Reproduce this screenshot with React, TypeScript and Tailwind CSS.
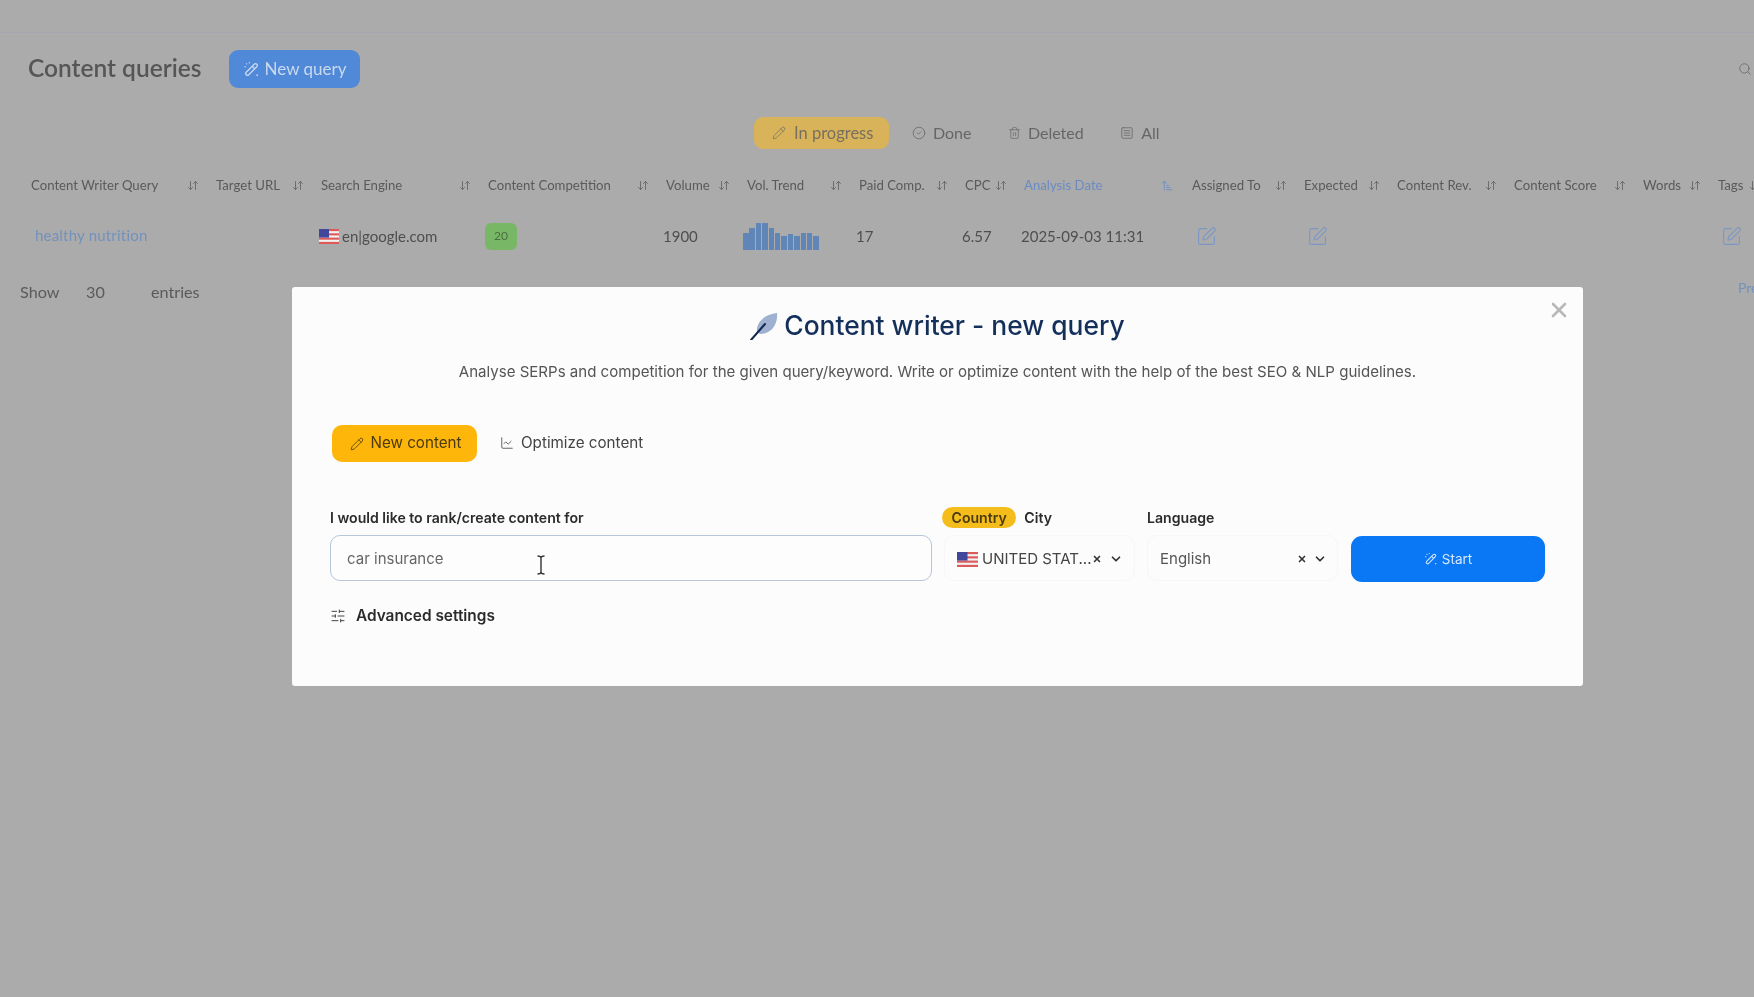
import {
  ArrowDownUp,
  ArrowUpNarrowWide,
  ChartLine,
  ChevronDown,
  CircleCheck,
  Pencil,
  Search,
  SlidersHorizontal,
  SquareMenu,
  SquarePen,
  Trash2,
  X,
} from 'lucide-react';

const columns = [
  'Content Writer Query',
  'Target URL',
  'Search Engine',
  'Content Competition',
  'Volume',
  'Vol. Trend',
  'Paid Comp.',
  'CPC',
  'Analysis Date',
  'Assigned To',
  'Expected',
  'Content Rev.',
  'Content Score',
  'Words',
  'Tags',
];

const trend = [17, 22, 27, 27, 22, 17, 14, 16, 14, 17, 17, 14];

const gridCols =
  'grid-cols-[185px_105px_167px_178px_81px_112px_106px_59px_168px_112px_93px_117px_129px_75px_60px]';

function WandIcon({ className }: { className?: string }) {
  return (
    <svg viewBox="0 0 24 24" fill="none" stroke="currentColor" strokeWidth="1.8" className={className}>
      <rect x="9.5" y="1.5" width="5" height="21" rx="2.5" transform="rotate(45 12 12)" />
      <path d="M13 7.5 16.5 11" />
      <circle cx="5" cy="4" r="1" fill="currentColor" stroke="none" />
      <circle cx="9" cy="2.5" r="1" fill="currentColor" stroke="none" />
      <circle cx="3" cy="8" r="1" fill="currentColor" stroke="none" />
      <circle cx="20" cy="20" r="1.2" fill="currentColor" stroke="none" />
    </svg>
  );
}

function UsFlag({ className }: { className?: string }) {
  return (
    <svg viewBox="0 0 20 14" preserveAspectRatio="none" className={className}>
      <rect width="20" height="14" fill="#f2f2f2" />
      <rect y="0" width="20" height="2" fill="#dd5a5a" />
      <rect y="4" width="20" height="2" fill="#dd5a5a" />
      <rect y="8" width="20" height="2" fill="#dd5a5a" />
      <rect y="12" width="20" height="2" fill="#dd5a5a" />
      <rect width="10" height="8" fill="#41479b" />
    </svg>
  );
}

function FeatherIcon() {
  return (
    <svg viewBox="0 0 28 28" className="w-[28px] h-[28px]">
      <path d="M7 20C6 12 12 3 27 1c1 9-4 21-17 21z" fill="#9fb0d0" />
      <path d="M1 28 15 12" stroke="#12284c" strokeWidth="2" strokeLinecap="round" />
    </svg>
  );
}

function IBeam() {
  return (
    <svg viewBox="0 0 10 20" className="w-[10px] h-[20px]" fill="none" stroke="#333" strokeWidth="1.4">
      <path d="M1.5 1C3.5 1 5 2 5 3v14c0 1-1.5 2-3.5 2M8.5 1C6.5 1 5 2 5 3M5 17c0 1 1.5 2 3.5 2" />
    </svg>
  );
}

function Background() {
  return (
    <div className="font-['Lato','Liberation_Sans',sans-serif] text-[#5a5a5a]">
      <div className="h-[33px] border-b border-[#a5a7ae]" />
      <div className="flex items-center h-[70px] mt-[1px] pl-[28px] pr-0">
        <h1 className="text-[24.5px] font-semibold text-[#565656] w-[201px] pb-[2px]">Content queries</h1>
        <button className="flex items-center justify-center gap-[5px] w-[131px] h-[38px] rounded-[9px] bg-[#5089d8] text-[#c9d9ee] text-[17px]">
          <WandIcon className="w-[17px] h-[17px]" />
          New query
        </button>
        <Search className="ml-auto mr-[2px] w-[14px] h-[14px] text-[#6b6b6b]" strokeWidth={1.5} />
      </div>

      <div className="flex items-center gap-[4.5px] h-[32px] mt-[13px] ml-[754px] text-[16px] text-[#666]">
        <div className="flex items-center gap-[8px] h-[32px] pl-[18px] pr-[16px] mr-[2px] rounded-[9px] bg-[#d8b35a] text-[16.5px] text-[#77705f]">
          <Pencil className="w-[14px] h-[14px]" strokeWidth={1.3} />
          In progress
        </div>
        <div className="flex items-center gap-[7px] px-[16px]">
          <CircleCheck className="w-[14px] h-[14px]" strokeWidth={1.3} />
          Done
        </div>
        <div className="flex items-center gap-[7px] px-[16px]">
          <Trash2 className="w-[13px] h-[14px]" strokeWidth={1.3} />
          Deleted
        </div>
        <div className="flex items-center gap-[7px] px-[16px]">
          <SquareMenu className="w-[14px] h-[14px]" strokeWidth={1.3} />
          All
        </div>
      </div>

      <div className={`grid ${gridCols} pl-[31px] mt-[26px] h-[22px] items-center text-[13.2px] whitespace-nowrap`}>
        {columns.map((col) => {
          const active = col === 'Analysis Date';
          return (
            <div key={col} className={`flex items-center justify-between pr-[17px] ${active ? 'text-[#6a8cc4]' : ''}`}>
              {col}
              {active ? (
                <ArrowUpNarrowWide className="w-[14px] h-[13px] shrink-0 mr-[1px]" strokeWidth={1.5} />
              ) : (
                <ArrowDownUp className="w-[12px] h-[13px] shrink-0" strokeWidth={1.5} />
              )}
            </div>
          );
        })}
      </div>

      <div className={`grid ${gridCols} pl-[28px] mt-[24px] h-[30px] items-center text-[15px] text-[#4f4f4f] whitespace-nowrap`}>
        <div className="pl-[7px] pb-[2px] text-[#7391bd] tracking-[0.2px]">healthy nutrition</div>
        <div />
        <div className="flex items-center gap-[3px]">
          <UsFlag className="w-[20px] h-[15px] ml-[1px]" />
          en|google.com
        </div>
        <div>
          <div className="flex items-center justify-center w-[32px] h-[27px] rounded-[6px] bg-[#78b765] text-[12px] text-[#4b6f42]">
            20
          </div>
        </div>
        <div>1900</div>
        <div className="flex items-end gap-[0.9px] h-[28px] ml-[-1px]">
          {trend.map((h, i) => (
            <div key={i} className="w-[5.5px] bg-[#5f86b6]" style={{ height: h }} />
          ))}
        </div>
        <div>17</div>
        <div>6.57</div>
        <div>2025-09-03 11:31</div>
        <div className="pl-[7px]">
          <SquarePen className="w-[21px] h-[21px] text-[#7b97c4]" strokeWidth={1.3} />
        </div>
        <div className="pl-[6px]">
          <SquarePen className="w-[21px] h-[21px] text-[#7b97c4]" strokeWidth={1.3} />
        </div>
        <div />
        <div />
        <div />
        <div className="pl-[6px]">
          <SquarePen className="w-[21px] h-[21px] text-[#7b97c4]" strokeWidth={1.3} />
        </div>
      </div>

      <div className="flex items-center justify-between mt-[30px] h-[22px] pl-[20px] text-[16.2px] text-[#5a5a5a]">
        <div className="flex items-center">
          <span className="w-[66px]">Show</span>
          <span className="w-[65px]">30</span>
          <span>entries</span>
        </div>
        <span className="text-[#7391bd] text-[14px] w-[16px] mb-[9px] overflow-hidden">Previous</span>
      </div>
    </div>
  );
}

function Modal() {
  return (
    <div className="absolute left-[292px] top-[287px] w-[1291px] h-[399px] rounded-[3px] bg-[#fcfcfd] px-[38px] font-['Inter','Liberation_Sans',sans-serif]">
      <X className="absolute right-[12px] top-[11px] w-[24px] h-[24px] text-[#b8b8b8]" strokeWidth={2.6} />

      <div className="flex items-center justify-center gap-[6px] pt-[15px] h-[62px] text-[26.4px] font-medium text-[#14305a]">
        <FeatherIcon />
        <h2>Content writer - new query</h2>
      </div>
      <p className="text-center text-[15.05px] text-[#555] mt-[12px] leading-[22px]">
        Analyse SERPs and competition for the given query/keyword. Write or optimize content with the help of the best SEO &amp; NLP guidelines.
      </p>

      <div className="flex items-center gap-[23px] mt-[42px] pl-[2px] text-[15.2px]">
        <button className="flex items-center gap-[6px] h-[37px] w-[145px] pl-[3px] justify-center rounded-[10px] bg-[#ffb60a] text-[#4a3a10]">
          <Pencil className="w-[14px] h-[14px]" strokeWidth={1.4} />
          New content
        </button>
        <button className="flex items-center gap-[7px] text-[#444]">
          <ChartLine className="w-[14px] h-[14px]" strokeWidth={1.4} />
          Optimize content
        </button>
      </div>

      <div className="flex gap-[10px] mt-[45px]">
        <div className="w-[602px]">
          <div className="flex items-center h-[21px] mb-[7px] pt-[1px] text-[14.1px] font-semibold text-[#2b2b2b]">
            I would like to rank/create content for
          </div>
          <div className="relative flex items-center h-[46px] px-[16px] pt-[2px] rounded-[10px] border border-[#b5c6d8] bg-[#fdfdfe] text-[15px] text-[#666]">
            car insurance
            <span className="absolute left-[205px] top-[19px]">
              <IBeam />
            </span>
          </div>
        </div>

        <div className="w-[193px]">
          <div className="flex items-center gap-[8px] h-[21px] mb-[7px] text-[14.1px] font-semibold text-[#2b2b2b]">
            <span className="flex items-center h-[21px] px-[9.5px] rounded-full bg-[#f5bd1c] text-[#4a3a10]">Country</span>
            City
          </div>
          <div className="flex items-center h-[46px] pl-[12px] pr-[11px] ml-[2px] pt-[2px] rounded-[10px] border border-[#f7f7f9] text-[15px] text-[#444]">
            <UsFlag className="w-[21px] h-[15px] mr-[4px]" />
            <span className="whitespace-nowrap">UNITED STAT...</span>
            <X className="w-[10px] h-[10px] ml-auto text-[#333]" strokeWidth={4} />
            <ChevronDown className="w-[14px] h-[14px] ml-[7px] text-[#333]" strokeWidth={3} />
          </div>
        </div>

        <div className="w-[191px] ml-[2px]">
          <div className="flex items-center h-[21px] mb-[7px] pt-[1px] text-[14.1px] font-semibold text-[#2b2b2b]">Language</div>
          <div className="flex items-center h-[46px] pl-[12px] pr-[10px] pt-[2px] rounded-[10px] border border-[#f7f7f9] text-[15px] text-[#555]">
            English
            <X className="w-[10px] h-[10px] ml-auto text-[#333]" strokeWidth={4} />
            <ChevronDown className="w-[14px] h-[14px] ml-[6px] text-[#333]" strokeWidth={3} />
          </div>
        </div>

        <div className="pt-[29px] ml-[3px]">
          <button className="flex items-center justify-center gap-[4px] w-[194px] h-[46px] rounded-[11px] bg-[#0a78f5] text-[13.5px] text-[#d5e8fd]">
            <WandIcon className="w-[14px] h-[14px]" />
            Start
          </button>
        </div>
      </div>

      <div className="flex items-center gap-[10px] mt-[22px] text-[15.4px] font-semibold text-[#2b2b2b]">
        <SlidersHorizontal className="w-[16px] h-[16px] text-[#444]" strokeWidth={1.5} />
        Advanced settings
      </div>
    </div>
  );
}

export default function App() {
  return (
    <div className="relative w-[1754px] h-[997px] overflow-hidden bg-[#ababab] blur-[0.5px]">
      <Background />
      <Modal />
    </div>
  );
}
